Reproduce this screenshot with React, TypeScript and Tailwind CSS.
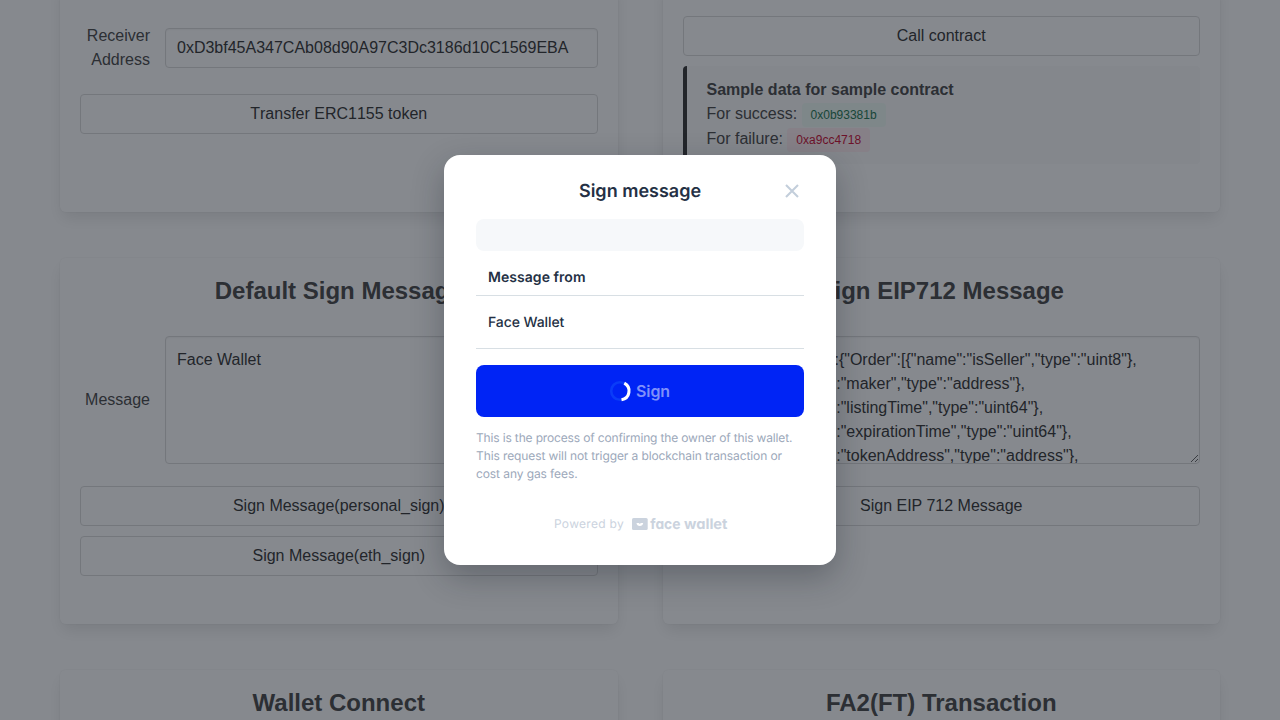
import type { ReactNode } from 'react';

const eip712 = [
  '{"types":{"Order":[{"name":"isSeller","type":"uint8"},',
  '{"name":"maker","type":"address"},',
  '{"name":"listingTime","type":"uint64"},',
  '{"name":"expirationTime","type":"uint64"},',
  '{"name":"tokenAddress","type":"address"},',
  '{"name":"tokenId","type":"uint256"},',
].join('\n');

function Card({ title, className = '', children }: { title?: string; className?: string; children?: ReactNode }) {
  return (
    <section
      className={`min-w-0 rounded-md bg-white px-5 shadow-[0_8px_16px_-2px_rgba(10,10,10,0.1),0_0_0_1px_rgba(10,10,10,0.02)] ${className}`}
    >
      {title && <h2 className="pt-[15px] text-center text-2xl leading-9 font-bold">{title}</h2>}
      {children}
    </section>
  );
}

function Button({ className = '', children }: { className?: string; children: ReactNode }) {
  return (
    <button
      className={`block h-10 w-full rounded border border-[#dbdbdb] bg-white text-center text-base leading-6 text-[#363636] ${className}`}
    >
      {children}
    </button>
  );
}

function Field({ label, children }: { label: string; children: ReactNode }) {
  return (
    <div className="flex items-center gap-[15px]">
      <label className="w-[70px] shrink-0 text-right leading-6">{label}</label>
      <div className="min-w-0 flex-1">{children}</div>
    </div>
  );
}

function Tag({ className, children }: { className: string; children: ReactNode }) {
  return <span className={`inline-flex h-6 items-center rounded px-[9px] text-xs ${className}`}>{children}</span>;
}

function Spinner() {
  return (
    <svg width="20" height="20" viewBox="0 0 20 20" fill="none" className="overflow-visible">
      <circle cx="10" cy="10" r="8.8" stroke="#0a3cf8" strokeWidth="2.6" />
      <path d="M14.3 2.2A8.8 8.8 0 0 1 11.5 18.7" stroke="white" strokeWidth="3.1" />
    </svg>
  );
}

function WalletLogo() {
  return (
    <svg width="96" height="18" viewBox="0 0 96 18" fill="#cbd3de" className="overflow-visible">
      <rect x="0" y="3" width="15.7" height="12" rx="1.6" />
      <path d="M4.5 8H11.2C11 10 9.7 11 7.8 11S4.7 10 4.5 8Z" fill="white" />
      <path d="M6.4 7.6H9.3L7.85 8.9Z" />
      <g className="font-['Inter',sans-serif] text-[14.5px] font-bold [font-feature-settings:'cv11']">
        <text x="18.2" y="14" textLength="30.2" lengthAdjust="spacingAndGlyphs">
          face
        </text>
        <text x="52" y="14" textLength="43.4" lengthAdjust="spacingAndGlyphs">
          wallet
        </text>
      </g>
    </svg>
  );
}

function SignDialog() {
  return (
    <div
      role="dialog"
      className="h-[410px] w-[392px] rounded-2xl bg-white px-8 font-['Inter',sans-serif] text-[#243044] shadow-[0_12px_32px_rgba(20,25,35,0.3)] [text-rendering:geometricPrecision]"
    >
      <header className="flex h-16 items-center pt-2">
        <span className="w-6" />
        <h1 className="flex-1 pt-0.5 text-center text-lg font-semibold">Sign message</h1>
        <button className="flex size-6 items-center justify-center">
          <svg width="14" height="14" viewBox="0 0 14 14" stroke="#c3cedb" strokeWidth="2.1">
            <path d="M1 1 13 13M13 1 1 13" />
          </svg>
        </button>
      </header>
      <div className="h-8 rounded-lg bg-[#f6f8fa]" />
      <div className="h-[45px] border-b border-[#d8dfe4] px-3 pt-[17px] text-sm leading-5 font-semibold tracking-[0.05px]">
        Message from
      </div>
      <div className="h-[53px] border-b border-[#d8dfe4] px-3 pt-[17px] text-sm leading-5 font-medium tracking-[-0.09px]">
        Face Wallet
      </div>
      <button className="mt-4 flex h-[52px] w-full items-center justify-center gap-1.5 rounded-lg bg-[#0024f5]">
        <Spinner />
        <span className="text-base font-semibold tracking-[-0.1px] text-[#7f90fa]">Sign</span>
      </button>
      <p className="mt-3 text-xs leading-[18px] whitespace-nowrap text-[#9ca8ba]">
        <span className="block tracking-[-0.152px]">This is the process of confirming the owner of this wallet.</span>
        <span className="block tracking-[-0.1px]">This request will not trigger a blockchain transaction or</span>
        <span className="block tracking-[-0.09px]">cost any gas fees.</span>
      </p>
      <footer className="mt-8 flex h-[18px] items-center justify-center gap-2 pl-0.5 text-[#cbd3de]">
        <span className="text-xs tracking-[0.3px]">Powered by</span>
        <WalletLogo />
      </footer>
    </div>
  );
}

export default function App() {
  return (
    <div className="relative h-[720px] w-[1280px] overflow-hidden bg-white font-['Liberation_Sans',sans-serif] text-base text-[#4a4a4a]">
      <main className="-mt-5 grid grid-cols-2 gap-x-[45px] gap-y-[46px] px-[60px]">
        <Card className="h-[232px] pt-11">
          <Field label="Receiver Address">
            <input
              readOnly
              value="0xD3bf45A347CAb08d90A97C3Dc3186d10C1569EBA"
              className="block h-10 w-full rounded border border-[#dbdbdb] bg-white px-[11px] text-[#363636] shadow-[inset_0_1px_2px_rgba(10,10,10,0.05)]"
            />
          </Field>
          <div className="mt-[22px]">
            <Button className="[font-kerning:none]">Transfer ERC1155 token</Button>
          </div>
        </Card>

        <Card className="h-[232px] pt-9">
          <Button>Call contract</Button>
          <div className="mt-2.5 h-[98px] rounded border-l-4 border-[#363636] bg-[#fafafa] pt-3 pl-5">
            <div className="h-6 leading-6 font-bold">Sample data for sample contract</div>
            <div className="flex h-[25px] items-center gap-[4.4px]">
              <span className="pb-0.5 leading-[23px]">For success:</span>
              <Tag className="bg-[#effaf5] text-[#257953]">0x0b93381b</Tag>
            </div>
            <div className="flex h-[25px] items-center gap-[4.4px]">
              <span className="pb-0.5 leading-[23px]">For failure:</span>
              <Tag className="bg-[#feecf0] text-[#cc0f35]">0xa9cc4718</Tag>
            </div>
          </div>
        </Card>

        <Card title="Default Sign Message" className="h-[366px]">
          <div className="mt-[27px]">
            <Field label="Message">
              <textarea
                readOnly
                value="Face Wallet"
                className="block h-32 w-full overflow-hidden rounded border border-[#dbdbdb] bg-white px-[11px] py-[11px] leading-6 text-[#363636] shadow-[inset_0_1px_2px_rgba(10,10,10,0.05)]"
              />
            </Field>
          </div>
          <div className="mt-[22px] space-y-2.5">
            <Button>Sign Message(personal_sign)</Button>
            <Button>Sign Message(eth_sign)</Button>
          </div>
        </Card>

        <Card title="Sign EIP712 Message" className="h-[366px]">
          <div className="mt-[27px]">
            <Field label="Message">
              <textarea
                readOnly
                value={eip712}
                className="block h-32 w-full overflow-hidden rounded border border-[#dbdbdb] bg-white px-[11px] py-[11px] leading-6 text-[#363636] shadow-[inset_0_1px_2px_rgba(10,10,10,0.05)]"
              />
            </Field>
          </div>
          <div className="mt-[22px]">
            <Button>Sign EIP 712 Message</Button>
          </div>
        </Card>

        <Card title="Wallet Connect" className="h-[200px]" />
        <Card title="FA2(FT) Transaction" className="h-[200px]" />
      </main>

      <div className="absolute inset-0 flex items-center justify-center bg-[rgba(13,20,30,0.5)]">
        <SignDialog />
      </div>
    </div>
  );
}
